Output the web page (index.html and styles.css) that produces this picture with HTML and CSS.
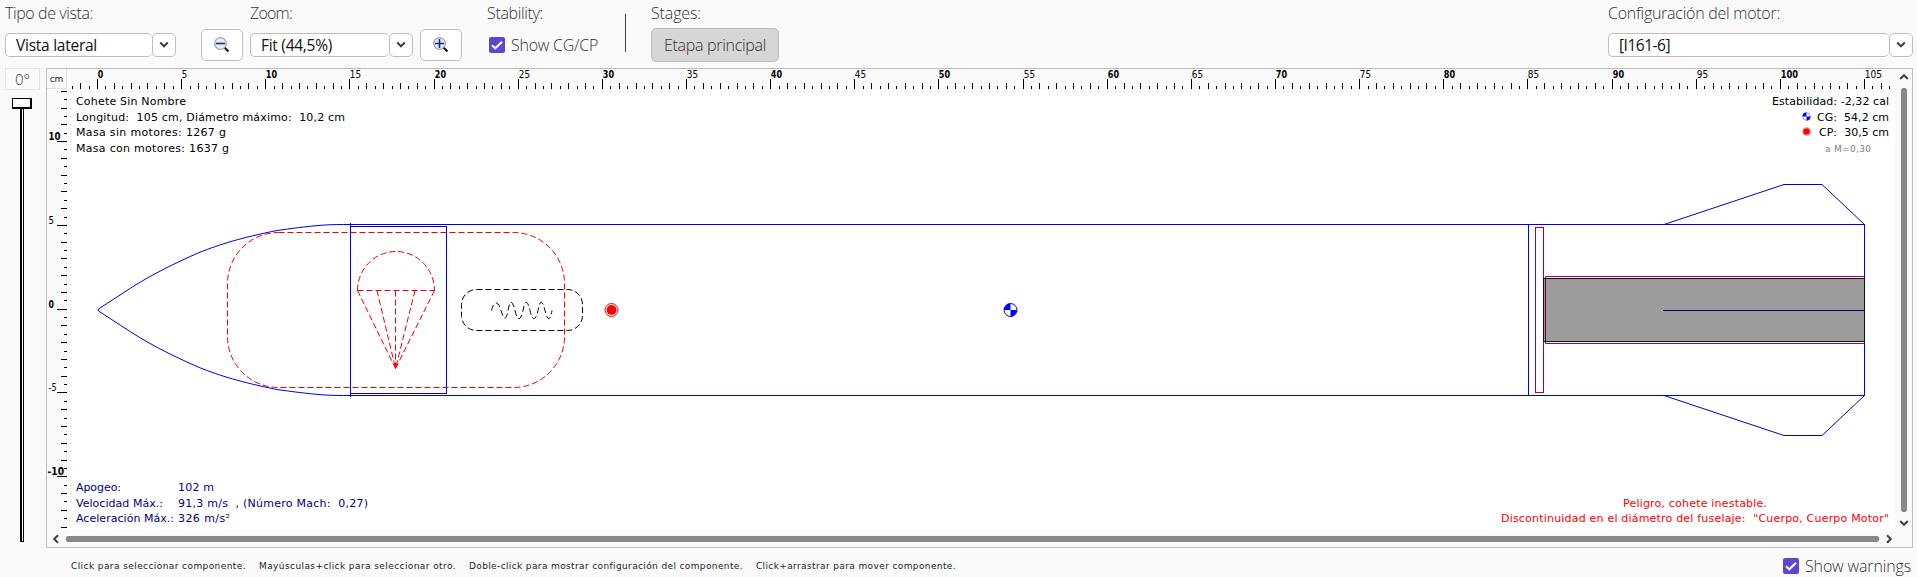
FILE: index.html
```html
<!DOCTYPE html>
<html lang="es">
<head>
<meta charset="utf-8">
<title>Cohete Sin Nombre</title>
<link rel="stylesheet" href="styles.css">
</head>
<body>
<div class="app">
  <header class="toolbar">
    <div class="group g-view">
      <span class="label"><span data-w="88">Tipo de vista:</span></span>
      <div class="combo"><span class="value"><span data-w="81">Vista lateral</span></span><span class="drop"><svg width="10" height="8"><path d="M1.2 1.5 5 5.3 8.8 1.5"/></svg></span></div>
    </div>
    <button class="icon-btn zoom-out"><svg width="16" height="16" viewBox="0 0 16 16"><path class="handle" d="M10.5 10.5 14.5 14.5"/><circle class="lens" cx="6.5" cy="6.5" r="5.8"/><path class="sign" d="M2 6.5h9"/></svg></button>
    <div class="group g-zoom">
      <span class="label"><span data-w="42">Zoom:</span></span>
      <div class="combo"><span class="value"><span data-w="71">Fit (44,5%)</span></span><span class="drop"><svg width="10" height="8"><path d="M1.2 1.5 5 5.3 8.8 1.5"/></svg></span></div>
    </div>
    <button class="icon-btn zoom-in"><svg width="16" height="16" viewBox="0 0 16 16"><path class="handle" d="M10.5 10.5 14.5 14.5"/><circle class="lens" cx="6.5" cy="6.5" r="5.8"/><path class="sign" d="M2 6.5h9M6.5 2v9"/></svg></button>
    <div class="group g-stab">
      <span class="label"><span data-w="56">Stability:</span></span>
      <div class="check"><span class="box"><svg width="16" height="16"><path d="M3 8.2 6.3 11.3 13 4.8"/></svg></span><span data-w="87">Show CG/CP</span></div>
    </div>
    <span class="divider"></span>
    <div class="group g-stages">
      <span class="label"><span data-w="50">Stages:</span></span>
      <button class="stage"><span data-w="102">Etapa principal</span></button>
    </div>
    <div class="group g-motor">
      <span class="label"><span data-w="172">Configuración del motor:</span></span>
      <div class="combo"><span class="value"><span data-w="51">[I161-6]</span></span><span class="drop"><svg width="10" height="8"><path d="M1.2 1.5 5 5.3 8.8 1.5"/></svg></span></div>
    </div>
  </header>

  <main class="main">
    <aside class="rotation">
      <span class="angle">0°</span>
      <div class="slider"><span class="thumb"></span><span class="track"></span></div>
    </aside>
    <section class="panel">
      <div class="corner">cm</div>
      <svg class="ruler-top" id="ruler-x" viewBox="68 69 1827 21"></svg>
      <div class="vbar"><svg width="10" height="8"><path d="M1.2 6 5 2.2 8.8 6"/></svg><span class="bar"></span><svg width="10" height="8"><path d="M1.2 2 5 5.8 8.8 2"/></svg></div>
      <svg class="ruler-left" id="ruler-y" viewBox="47 90 21 440"></svg>
      <svg class="canvas" viewBox="68 90 1827 440">
        <g class="blue">
          <path d="M350.5 224.5C341 224.5 331 224.5 322 225.2C306 226.5 291 228.5 277 230.5C240 238 221 244 200 252.2C171 264.5 143 279.5 125 291.8L98.5 309L98 310L98.5 311L125 328.2C143 340.5 171 355.5 200 367.8C221 376 240 382 277 389.5C291 391.5 306 393.5 322 394.8C331 395.5 341 395.5 350.5 395.5"/>
          <path d="M350.5 223V397M350.5 224.5H1864.5V395.5H350.5M1528.5 224.5V395.5"/>
          <rect x="350.5" y="226.5" width="96" height="167"/>
        </g>
        <g class="fin">
          <path d="M1664 224.5 1784 184.5H1822L1864.5 224.5M1664 395.5 1784 435.5H1822L1864.5 395.5"/>
        </g>
        <g class="chute">
          <rect x="227.5" y="232.5" width="337" height="155" rx="51"/>
          <path d="M357.5 290.5A38.5 39 0 0 1 434.5 290.5"/>
          <path d="M357.5 290.5H434.5M357.5 290.5 395.5 368.5M377 290.5 395.5 368.5M395.5 290.5V368.5M415 290.5 395.5 368.5M434.5 290.5 395.5 368.5"/>
        </g>
        <g class="cord">
          <rect x="461.5" y="289.5" width="121" height="41" rx="15"/>
          <path d="M491.5 310.5C494 300.5 498 300.5 501 310.5S506 321 508 310.5Q511 294 515 310.5T523 310.5Q526 294 530 310.5T538 310.5Q541 294 545 310.5T552 310.5"/>
        </g>
        <g class="purple">
          <rect x="1535.5" y="227.5" width="8" height="165"/>
          <path d="M1864.5 276.5H1545.5V343.5H1864.5"/>
        </g>
        <rect class="motor" x="1543.5" y="278.5" width="321" height="63"/>
        <path class="purple dark" d="M1545.5 279V341"/>
        <path class="mid-fin" d="M1663 310.5H1864"/>
        <g class="cp"><circle class="halo" cx="611.5" cy="310" r="6.5"/><circle class="dot" cx="611.5" cy="310" r="5"/></g>
        <g class="cg"><circle class="halo" cx="1010.5" cy="310" r="6.5"/><path class="dot" d="M1010.5 310V303.5A6.5 6.5 0 0 0 1004 310ZM1010.5 310V316.5A6.5 6.5 0 0 0 1017 310Z"/></g>

        <g class="info">
          <text x="76" y="105" textLength="110">Cohete Sin Nombre</text>
          <text x="76" y="121" textLength="269">Longitud:  105 cm, Diámetro máximo:  10,2 cm</text>
          <text x="76" y="136" textLength="150">Masa sin motores: 1267 g</text>
          <text x="76" y="152" textLength="153">Masa con motores: 1637 g</text>
          <text x="1772" y="105" textLength="117">Estabilidad: -2,32 cal</text>
          <text x="1817" y="121" textLength="72">CG:  54,2 cm</text>
          <text x="1819" y="136" textLength="70">CP:  30,5 cm</text>
          <text class="mach" x="1825" y="152" textLength="46">a M=0,30</text>
        </g>
        <g class="cg"><circle class="halo faint" cx="1806.5" cy="116.5" r="3.8"/><path class="dot" d="M1806.5 116.5V112.5A4 4 0 0 0 1802.5 116.5ZM1806.5 116.5V120.5A4 4 0 0 0 1810.5 116.5Z"/></g>
        <g class="cp"><circle class="halo faint" cx="1806.5" cy="131.5" r="4"/><circle class="dot" cx="1806.5" cy="131.5" r="3.3"/></g>
        <g class="flight">
          <text x="76" y="491" textLength="45">Apogeo:</text><text x="178" y="491" textLength="36">102 m</text>
          <text x="76" y="507" textLength="87">Velocidad Máx.:</text><text x="178" y="507" textLength="190">91,3 m/s  , (Número Mach:  0,27)</text>
          <text x="76" y="522" textLength="98">Aceleración Máx.:</text><text x="178" y="522" textLength="52">326 m/s²</text>
        </g>
        <g class="warn">
          <text x="1623" y="507" textLength="144">Peligro, cohete inestable.</text>
          <text x="1501" y="522" textLength="388">Discontinuidad en el diámetro del fuselaje:  "Cuerpo, Cuerpo Motor"</text>
        </g>
      </svg>
      <div class="hbar"><svg width="8" height="10"><path d="M6 1.2 2.2 5 6 8.8"/></svg><span class="bar"></span><svg width="8" height="10"><path d="M2 1.2 5.8 5 2 8.8"/></svg></div>
    </section>
  </main>

  <footer class="status">
    <div class="hints">
      <span data-w="175">Click para seleccionar componente.</span>
      <span data-w="197">Mayúsculas+click para seleccionar otro.</span>
      <span data-w="274">Doble-click para mostrar configuración del componente.</span>
      <span data-w="200">Click+arrastrar para mover componente.</span>
    </div>
    <div class="check"><span class="box"><svg width="16" height="16"><path d="M3 8.2 6.3 11.3 13 4.8"/></svg></span><span data-w="106">Show warnings</span></div>
  </footer>
</div>
<script src="script.js"></script>
</body>
</html>
```
FILE: styles.css
```css
* { box-sizing: border-box; }
body {
  margin: 0;
  background: #fafafa;
  color: #333;
  font: 300 16px "Open Sans", sans-serif;
}
button { font: inherit; color: inherit; padding: 0; }
.app { width: 1917px; height: 577px; overflow: hidden; }
[data-w] { display: inline-block; white-space: nowrap; }

/* toolbar */
.toolbar { display: flex; align-items: flex-start; height: 68px; padding-left: 5px; }
.group { display: flex; flex-direction: column; }
.label { height: 33px; line-height: 26px; }
.g-view { width: 171px; }
.g-zoom { width: 163px; }
.g-stab { width: 120px; margin-left: 25px; }
.g-stages { width: 128px; margin-left: 25px; }
.g-motor { width: 305px; margin-left: auto; margin-right: 4px; }
.combo { display: flex; height: 24px; color: #111; font-weight: 400; font-size: 15.5px; }
.value, .drop { border: 1px solid #bdbdbd; border-radius: 5px; background: #fff; }
.value { flex: 1; padding-left: 10px; line-height: 22px; border-right: 0; }
.drop { width: 24px; display: flex; align-items: center; justify-content: center; }
.icon-btn {
  width: 42px; height: 32px; margin-top: 29px;
  display: flex; align-items: center; justify-content: center;
  border: 1px solid #bdbdbd; border-radius: 5px; background: #fff;
}
.zoom-out { margin-left: 25px; margin-right: 7px; }
.zoom-in { margin-left: 7px; }
.drop path, .vbar path, .hbar path { fill: none; stroke: #404040; stroke-width: 2; }
.handle { stroke: #111; stroke-width: 2.2; fill: none; }
.lens { fill: #e9edf1; stroke: #a2a2a2; stroke-width: 1.3; }
.sign { stroke: #0a2ea0; stroke-width: 1.6; fill: none; }
.check { display: flex; align-items: center; gap: 6px; }
.g-stab .check { height: 24px; padding-left: 2px; }
.box { width: 16px; height: 16px; border-radius: 2px; background: #5f46d2; }
.box svg { display: block; }
.box path { fill: none; stroke: #fff; stroke-width: 2; }
.divider { width: 1px; height: 38px; margin-top: 14px; margin-left: 18px; background: #404040; }
.g-stages .label { height: 28px; }
.stage { height: 34px; border: 1px solid #bdbdbd; border-radius: 5px; background: #d6d6d6; }

/* rotation slider and drawing panel */
.main { display: flex; height: 480px; }
.rotation { width: 46px; padding-left: 5px; }
.angle {
  display: block; width: 35px; height: 22px; border: 1px solid #e4e4e4;
  line-height: 20px; text-align: center; font-size: 15px;
}
.slider { display: flex; flex-direction: column; align-items: center; width: 40px; height: 444px; margin: 8px 0 0 -3px; }
.thumb { width: 20px; height: 11px; border: 1px solid #000; border-bottom-width: 2px; border-right-width: 2px; background: #fff; }
.track { width: 4px; flex: 1; background: #fff; border: solid #000; border-width: 0 1px 1px 2px; }
.panel {
  display: grid; grid-template: 21px 440px 17px / 21px 1827px 17px;
  width: 1867px; height: 480px; border: 1px solid #bdbdbd;
}
.corner { width: 20px; height: 20px; border: 1px solid #e0e0e0; border-width: 0 1px 1px 0; font: 9px/20px "DejaVu Sans", sans-serif; text-align: center; color: #222; }
.panel > svg { display: block; width: 100%; height: 100%; }
.canvas { background: #fff; }
.vbar { grid-area: 1 / 3 / 3 / 4; display: flex; flex-direction: column; align-items: center; padding: 4px 0 3px 1px; gap: 7px; }
.vbar .bar { width: 6px; flex: 1; border-radius: 2px; background: #888; }
.hbar { grid-area: 3 / 1 / 4 / 3; display: flex; align-items: center; padding: 1px 2px 0 5px; gap: 6px; }
.hbar .bar { height: 6px; flex: 1; border-radius: 2px; background: #888; }

.tick { stroke: #000; stroke-width: 1; shape-rendering: crispEdges; }
.num { font: 9.6px "DejaVu Sans", sans-serif; fill: #000; }
.num.bold { font-weight: 700; }

/* rocket */
.canvas g { fill: none; }
.blue { stroke: #0000e8; }
.fin { stroke: #0000c8; }
.chute { stroke: #f00000; stroke-dasharray: 6 3; }
.cord { stroke: #000; stroke-dasharray: 6 3; }
.purple { fill: none; stroke: #a0005a; }
.purple.dark { stroke: #6a003c; }
.motor { fill: rgba(0, 0, 0, .39); stroke: #111; }
.mid-fin { stroke: #000080; }
.cp .halo { stroke: #f00; }
.cp .dot { fill: #f00; }
.cg .halo { stroke: #00f; fill: #fff; }
.canvas .faint { stroke-opacity: .4; }
.cg .dot { fill: #00f; }
.canvas text { font: 11px "DejaVu Sans", sans-serif; white-space: pre; }
.info text { fill: #000; }
.canvas .mach { font-size: 9px; fill: #808080; }
.flight text { fill: #000080; }
.warn text { fill: #f00; }

/* status line */
.status { display: flex; justify-content: space-between; height: 29px; padding: 1px 6px 0 71px; }
.hints { display: flex; gap: 13px; font: 9px/34px "DejaVu Sans", sans-serif; color: #222; }
.status .check { height: 34px; }
```
FILE: script.js
```js
const NS = "http://www.w3.org/2000/svg";
function add(parent, name, attrs, text) {
  const el = document.createElementNS(NS, name);
  for (const k in attrs) el.setAttribute(k, attrs[k]);
  if (text) el.textContent = text;
  parent.appendChild(el);
}

// horizontal ruler, a tick each half centimetre
const rx = document.getElementById("ruler-x");
for (let i = -3; i <= 213; i++) {
  const x = Math.floor(97.5 + i * 8.4145) + 0.5;
  const len = i % 10 === 0 ? 10 : i % 2 === 0 ? 6 : 3;
  add(rx, "path", { class: "tick", d: `M${x} ${89 - len}V89` });
  if (i % 10 === 0) {
    const v = i / 2;
    const w = String(v).length;
    add(rx, "text", { class: v % 10 === 0 ? "num bold" : "num", x: x + 0.3, y: 78, textLength: w === 1 ? 5.5 : w === 2 ? 11.3 : 17.3, lengthAdjust: "spacingAndGlyphs" }, String(v));
  }
}

// vertical ruler
const ry = document.getElementById("ruler-y");
for (let i = -26; i <= 26; i++) {
  const y = Math.floor(309.2 - i * 8.379) + 0.5;
  const len = i % 10 === 0 ? 10 : i % 2 === 0 ? 6 : 3;
  add(ry, "path", { class: "tick", d: `M${67 - len} ${y}H67` });
  if (i % 10 === 0) {
    const v = i / 2;
    add(ry, "text", {
      class: v % 10 === 0 ? "num bold" : "num",
      x: v === -10 ? 47.5 : 48.5, y: y - 1.5,
      textLength: { 10: 12, 5: 5.5, 0: 5.5, "-5": 8, "-10": 16.5 }[v], lengthAdjust: "spacingAndGlyphs"
    }, String(v));
  }
}

// set each label to its intended advance width
document.querySelectorAll("[data-w]").forEach(el => {
  const n = el.textContent.length;
  const w = el.getBoundingClientRect().width;
  el.style.letterSpacing = ((el.dataset.w - w) / n).toFixed(3) + "px";
});
```
